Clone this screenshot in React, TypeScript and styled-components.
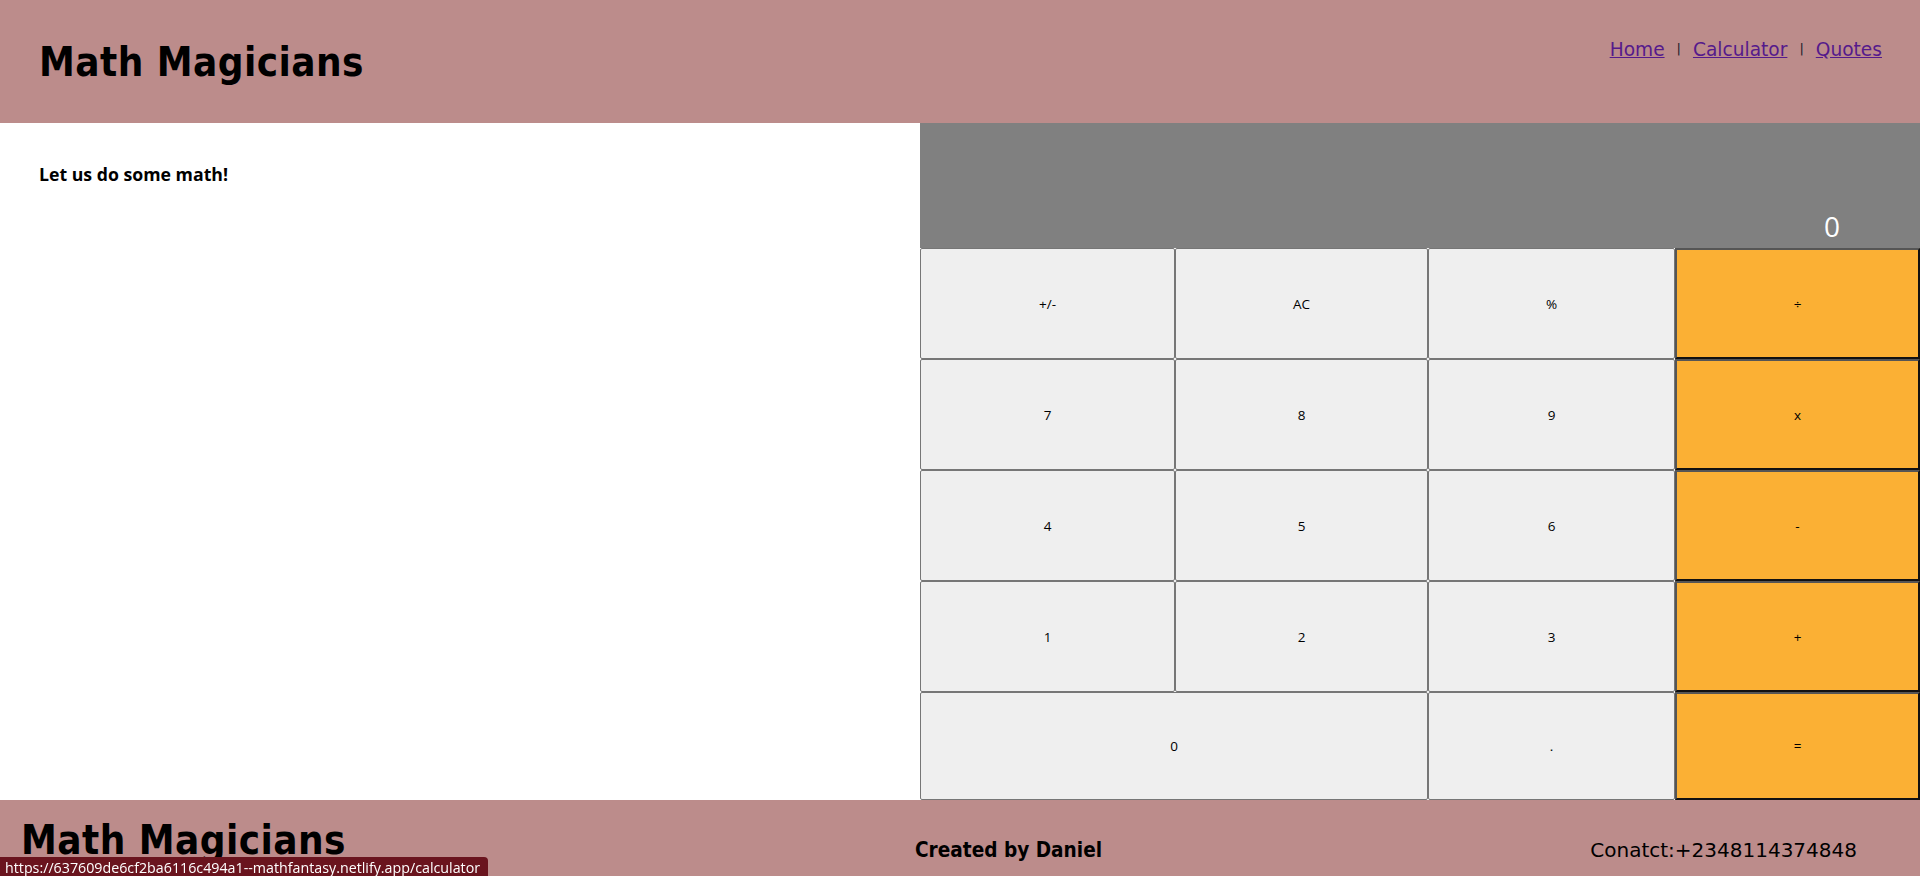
import React from 'react';
import styled, { createGlobalStyle } from 'styled-components';

const GlobalStyle = createGlobalStyle`
  html, body {
    margin: 0;
    padding: 0;
    overflow: hidden;
    background: #ffffff;
  }
  body {
    font-family: "Open Sans", "Noto Sans", sans-serif;
    color: #000000;
  }
  * { box-sizing: border-box; }
`;

const MAUVE = '#bc8c8b';

const Page = styled.div`
  width: 1920px;
  display: flex;
  flex-direction: column;
`;

const Header = styled.header`
  height: 123px;
  background: ${MAUVE};
  display: flex;
  justify-content: space-between;
  align-items: flex-start;
  padding: 39px 38px 0 39px;
`;

const Brand = styled.h1`
  margin: 0;
  font-family: "DejaVu Sans Condensed", "DejaVu Sans", sans-serif;
  font-stretch: condensed;
  font-weight: bold;
  font-size: 40px;
  letter-spacing: 0.45px;
  line-height: normal;
  color: #000;
`;

const Nav = styled.nav`
  font-family: "DejaVu Sans", sans-serif;
  font-size: 18.6px;
  line-height: normal;
  white-space: nowrap;
`;

const NavLink = styled.a`
  color: #551a8b;
  text-decoration: underline;
`;

const Sep = styled.span`
  display: inline-block;
  margin: 0 12px;
  color: #1a1a2a;
  font-size: 13px;
  vertical-align: 3px;
`;

const Main = styled.main`
  display: grid;
  grid-template-columns: 920px 1000px;
  height: 677px;
`;

const Intro = styled.section`
  padding: 39px 39px 0 39px;
`;

const IntroText = styled.p`
  margin: 0;
  font-family: "Open Sans", sans-serif;
  font-weight: bold;
  font-size: 17.7px;
  line-height: normal;
`;

const Calc = styled.div`
  display: grid;
  grid-template-columns: 255px 253px 247px 245px;
  grid-template-rows: 125px repeat(4, 111px) 108px;
  background: #ffffff;
`;

const Display = styled.div`
  grid-column: 1 / -1;
  background: #808080;
  color: #ffffff;
  display: flex;
  justify-content: flex-end;
  align-items: flex-end;
  padding: 0 80px 3px 0;
  font-family: "Open Sans", sans-serif;
  font-size: 28px;
  line-height: normal;
`;

const Key = styled.button<{ $op?: boolean; $wide?: boolean }>`
  grid-column: ${(p) => (p.$wide ? 'span 2' : 'span 1')};
  margin: 0;
  padding: 0;
  font-family: "Open Sans", sans-serif;
  font-size: 13.5px;
  color: #000;
  background: ${(p) => (p.$op ? '#fbb034' : '#efefef')};
  border-style: solid;
  border-width: ${(p) => (p.$op ? '2px' : '1px')};
  border-color: ${(p) => (p.$op ? '#555555 #111111 #111111 #555555' : '#767676')};
  border-radius: ${(p) => (p.$op ? '0' : '2px')};
  cursor: pointer;
`;

const Footer = styled.footer`
  height: 110px;
  background: ${MAUVE};
  display: grid;
  grid-template-columns: 894px 1fr auto;
  align-items: start;
  align-content: start;
  padding: 17px 63px 0 21px;
`;

const FooterBrand = styled.h2`
  margin: 0;
  font-family: "DejaVu Sans Condensed", "DejaVu Sans", sans-serif;
  font-stretch: condensed;
  font-weight: bold;
  font-size: 40px;
  letter-spacing: 0.45px;
  line-height: normal;
`;

const Credit = styled.p`
  margin: 21px 0 0 0;
  font-family: "DejaVu Sans Condensed", "DejaVu Sans", sans-serif;
  font-stretch: condensed;
  font-weight: bold;
  font-size: 20.6px;
  line-height: normal;
`;

const Contact = styled.p`
  margin: 21px 0 0 0;
  font-family: "DejaVu Sans", sans-serif;
  font-size: 20px;
  line-height: normal;
`;

const StatusBubble = styled.div`
  position: fixed;
  left: 0;
  top: 857px;
  height: 24px;
  padding: 1px 8px 0 5px;
  background: #6a141e;
  color: #ffffff;
  font-family: "Open Sans", sans-serif;
  font-size: 14.25px;
  line-height: 20px;
  border-top-right-radius: 4px;
  white-space: nowrap;
`;

type KeyDef = { label: string; op?: boolean; wide?: boolean };

const keys: KeyDef[] = [
  { label: '+/-' }, { label: 'AC' }, { label: '%' }, { label: '÷', op: true },
  { label: '7' }, { label: '8' }, { label: '9' }, { label: 'x', op: true },
  { label: '4' }, { label: '5' }, { label: '6' }, { label: '-', op: true },
  { label: '1' }, { label: '2' }, { label: '3' }, { label: '+', op: true },
  { label: '0', wide: true }, { label: '.' }, { label: '=', op: true },
];

export default function App() {
  return (
    <Page>
      <GlobalStyle />
      <Header>
        <Brand>Math Magicians</Brand>
        <Nav>
          <NavLink href="#home">Home</NavLink>
          <Sep>|</Sep>
          <NavLink href="#calculator">Calculator</NavLink>
          <Sep>|</Sep>
          <NavLink href="#quotes">Quotes</NavLink>
        </Nav>
      </Header>
      <Main>
        <Intro>
          <IntroText>Let us do some math!</IntroText>
        </Intro>
        <Calc>
          <Display>0</Display>
          {keys.map((k) => (
            <Key key={k.label} type="button" $op={k.op} $wide={k.wide}>
              {k.label}
            </Key>
          ))}
        </Calc>
      </Main>
      <Footer>
        <FooterBrand>Math Magicians</FooterBrand>
        <Credit>Created by Daniel</Credit>
        <Contact>Conatct:+2348114374848</Contact>
      </Footer>
      <StatusBubble>https://637609de6cf2ba6116c494a1--mathfantasy.netlify.app/calculator</StatusBubble>
    </Page>
  );
}
